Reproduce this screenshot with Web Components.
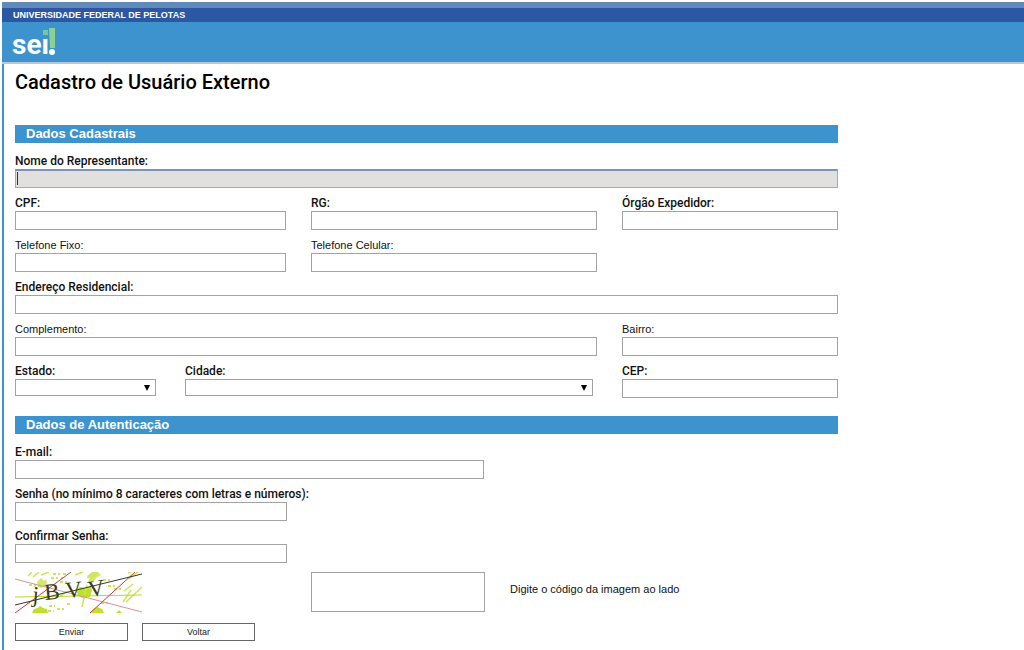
<!DOCTYPE html>
<html lang="pt-BR">
<head>
<meta charset="utf-8">
<title>SEI - Cadastro de Usuário Externo</title>
<style>
  html, body { margin: 0; background: #fff; }
  body { font-family: "Liberation Sans", Arial, sans-serif; font-size: 11px; color: #111; }
</style>
</head>
<body>
<sei-page>
  <sei-header slot="header" org="UNIVERSIDADE FEDERAL DE PELOTAS"></sei-header>
  <sei-title>Cadastro de Usuário Externo</sei-title>
  <sei-form>
    <sei-section heading="Dados Cadastrais">
      <sei-field label="Nome do Representante:" required active span="3"></sei-field>
      <sei-field label="CPF:" required></sei-field>
      <sei-field label="RG:" required></sei-field>
      <sei-field label="Órgão Expedidor:" required></sei-field>
      <sei-field label="Telefone Fixo:"></sei-field>
      <sei-field label="Telefone Celular:" span="rest"></sei-field>
      <sei-field label="Endereço Residencial:" required span="3"></sei-field>
      <sei-field label="Complemento:" span="2"></sei-field>
      <sei-field label="Bairro:"></sei-field>
      <sei-place>
        <sei-select label="Estado:"></sei-select>
        <sei-select label="Cidade:"></sei-select>
      </sei-place>
      <sei-field label="CEP:" required></sei-field>
    </sei-section>
    <sei-section heading="Dados de Autenticação">
      <sei-field label="E-mail:" required type="email" span="3" size="medium"></sei-field>
      <sei-field label="Senha (no mínimo 8 caracteres com letras e números):" required type="password" span="3" size="small"></sei-field>
      <sei-field label="Confirmar Senha:" required type="password" span="3" size="small"></sei-field>
    </sei-section>
    <sei-captcha>Digite o código da imagem ao lado</sei-captcha>
    <sei-actions>
      <sei-button>Enviar</sei-button>
      <sei-button>Voltar</sei-button>
    </sei-actions>
  </sei-form>
</sei-page>

<script>
const define = (name, render) => customElements.define(name, class extends HTMLElement {
  connectedCallback() {
    if (this.shadowRoot) return;
    const root = this.attachShadow({ mode: 'open' });
    root.innerHTML = render(this);
  }
});

define('sei-page', () => `
  <style>
    :host { display: block; box-sizing: border-box; min-height: 100vh; padding: 2px 0 0 2px; }
    .frame { box-sizing: border-box; min-height: calc(100vh - 2px); border-left: 2px solid #3d94ce; }
    main { padding: 8px 11px; }
  </style>
  <div class="frame"><slot name="header"></slot><main><slot></slot></main></div>`);

define('sei-header', el => `
  <style>
    :host { display: block; margin-left: -2px; }
    .org { border-top: 6px solid #5f8ab9; background: #2b57a3; color: #fff; padding-left: 11px;
      font: bold 9px/14px "Liberation Sans", Arial, sans-serif; }
    .bar { background: #3d93cd; height: 40px; border-bottom: 2px solid #bcc6d2; padding-left: 10px; }
    svg { display: block; }
    text { font: bold 28px Roboto, sans-serif; fill: #fff; }
  </style>
  <header>
    <div class="org">${el.getAttribute('org')}</div>
    <div class="bar">
      <svg width="48" height="40" viewBox="0 0 48 40" role="img" aria-label="sei!">
        <text x="0" y="32">sei</text>
        <path d="M29 6h9v10h-9z" fill="#3d93cd"/>
        <path d="M31 8h5v5h-5z" fill="#74c79f"/>
        <path d="M37 6h6v20h-5z" fill="#8ed08f"/>
        <circle cx="40" cy="30" r="3" fill="#fff"/>
      </svg>
    </div>
  </header>`);

define('sei-title', () => `
  <style>
    :host { display: block; }
    h1 { margin: 0 0 32px; font: 500 20px/21px Roboto, sans-serif; color: #000; }
  </style>
  <h1><slot></slot></h1>`);

define('sei-form', () => `
  <style>
    :host { display: block; }
    form { display: flex; flex-direction: column; max-width: 823px; }
  </style>
  <form novalidate><slot></slot></form>`);

define('sei-section', el => `
  <style>
    :host { display: block; }
    h2 { margin: 0 0 10px; padding-left: 11px; background: #3d93cd; color: #fff;
      font: bold 13px/18px "Liberation Sans", Arial, sans-serif; }
    .grid { display: grid; grid-template-columns: 271fr 286fr 216fr; column-gap: 25px; row-gap: 7px; }
    :host(:first-child) .grid { margin-bottom: 18px; }
  </style>
  <section><h2>${el.getAttribute('heading')}</h2><div class="grid"><slot></slot></div></section>`);

define('sei-field', el => `
  <style>
    :host { display: block; min-width: 0; }
    :host([span="3"]) { grid-column: 1 / -1; }
    :host([span="2"]) { grid-column: span 2; }
    :host([span="rest"]) { grid-column: 2 / -1; }
    :host([span="rest"]) input { width: 54.2%; }
    :host([size="medium"]) input { width: 57%; }
    :host([size="small"]) input { width: 33%; }
    label { display: block; line-height: 16px; white-space: nowrap; }
    :host([required]) label { font: 500 12px/16px Roboto, sans-serif; }
    input { display: block; box-sizing: border-box; width: 100%; height: 19px; margin: 0; padding: 0 2px;
      border: 1px solid #a3a3a3; border-radius: 0; background: #fff; font: inherit; outline: none; }
    :host([active]) input { border-color: #8fb0d6; border-top: 2px solid #7c93b4; caret-color: transparent;
      background: linear-gradient(#333, #333) 1px 1px / 1px 13px no-repeat, #e1e0df; }
  </style>
  <label for="control">${el.getAttribute('label')}</label>
  <input id="control" type="${el.getAttribute('type') || 'text'}">`);

define('sei-place', () => `
  <style>
    :host { display: grid; grid-column: span 2; grid-template-columns: 141fr 408fr; gap: 29px; padding-right: 4px; }
  </style>
  <slot></slot>`);

define('sei-select', el => `
  <style>
    :host { display: block; min-width: 0; }
    label { display: block; font: 500 12px/16px Roboto, sans-serif; }
    .box { display: grid; align-items: center; }
    .box > * { grid-area: 1 / 1; }
    select { appearance: none; box-sizing: border-box; width: 100%; height: 17px; margin: 0; padding: 0 16px 0 2px;
      border: 1px solid #a3a3a3; border-radius: 0; background: #fff; font: inherit; }
    svg { justify-self: end; margin-right: 6px; pointer-events: none; }
  </style>
  <label for="control">${el.getAttribute('label')}</label>
  <div class="box">
    <select id="control"><option></option></select>
    <svg width="6" height="6" viewBox="0 0 6 6" aria-hidden="true"><path d="M0 0h6L3 6z" fill="#000"/></svg>
  </div>`);

define('sei-captcha', () => `
  <style>
    :host { display: grid; grid-template-columns: 271fr 174fr 328fr; column-gap: 25px; margin: 9px 0; }
    svg { display: block; }
    text { font-family: "Liberation Serif", serif; font-size: 23px; fill: #3b3f19; }
    input { box-sizing: border-box; width: 100%; height: 40px; margin: 0; border: 1px solid #a3a3a3;
      border-radius: 0; background: #fff; font: inherit; outline: none; }
    label { padding-top: 9px; line-height: 16px; }
  </style>
  <svg width="127" height="42" viewBox="0 0 127 42" role="img" aria-label="Código de verificação">
    <g fill="#bfe02c">
      <path d="M17 41l2-4 4-1 2-2 3 2 4 1 1 4zM61 18l4-3 5 1 6-2 1 5-2 6-8 1-4-3zM76 41l2-4 4-2 5 2 2 4zM101 41l3-3 3 3z"/>
      <path d="M22 10l4-4 3 3 2-2 1 4-5 5-4-1zM72 4l5-4h6l3 3-5 3-3 5-3-4z" opacity=".7"/>
    </g>
    <g stroke="#cce557" fill="none">
      <path d="M13 4l4-4m1 5l6-5m2 3l8-3m-15 14l4 3m37-14l8-3m4 6l7-6m-5 9l9-9m-30 19l-8 5m22 11l5-22m41-12l8-4m-7 10l10-8M108 30l8-12m-5 12l16-15m-18 4l9-7" stroke-width="1.5"/>
      <path d="M38 2h14M36 6h12M45 10h8M88 8h8M14 13h11M34 34h6M42 37h7M12 31h4M33 39h6M52 32h5M86 31h7M93 14h9M99 17h8" stroke-width="2" stroke-dasharray="3 2 2 3"/>
      <path d="M0 25l127-2" stroke="#b7da25"/>
    </g>
    <g fill="none">
      <path d="M0 7l127 33" stroke="#d7929c"/>
      <path d="M0 41L56 0M75 41L120 0" stroke="#cf3640"/>
      <path d="M0 33L127 2" stroke="#333c2b"/>
    </g>
    <text x="17" y="30" transform="rotate(4 17 30)">j</text>
    <text x="30" y="28" transform="rotate(-5 30 28)">B</text>
    <text x="51" y="26" transform="rotate(-5 51 26)">V</text>
    <text x="74" y="25" transform="rotate(-8 74 25)">V</text>
  </svg>
  <input id="code" type="text">
  <label for="code"><slot></slot></label>`);

define('sei-actions', () => `
  <style>:host { display: flex; gap: 14px; }</style>
  <slot></slot>`);

define('sei-button', () => `
  <style>
    :host { display: block; }
    button { display: block; box-sizing: border-box; width: 113px; height: 18px; margin: 0; padding: 0;
      border: 1px solid #666; border-radius: 0; background: #fff; color: #222;
      font: 9px/14px "Liberation Sans", Arial, sans-serif; }
  </style>
  <button type="button"><slot></slot></button>`);
</script>
</body>
</html>
